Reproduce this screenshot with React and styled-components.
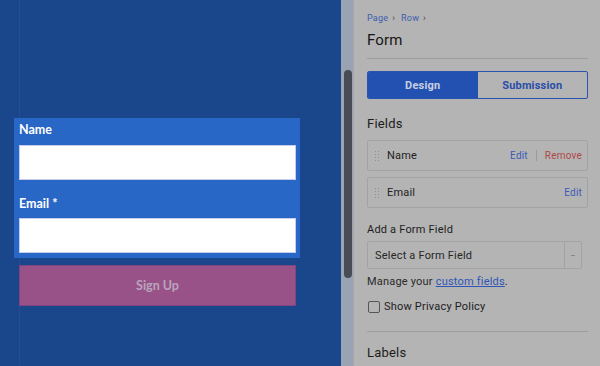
import React from 'react';
import styled, { createGlobalStyle } from 'styled-components';

const Global = createGlobalStyle`
  html, body { margin: 0; padding: 0; }
  body { font-family: Roboto, "Liberation Sans", sans-serif; background: #b4b4b4; }
  * { box-sizing: border-box; }
`;

const Screen = styled.div`
  display: flex;
  width: 600px;
  height: 366px;
  overflow: hidden;
`;

const Canvas = styled.div`
  width: 341px;
  flex-shrink: 0;
  background: #1a478c;
  padding: 118px 0 0 14px;
  background-image: linear-gradient(to right, transparent 19px, rgba(50, 90, 160, 0.35) 19px, rgba(50, 90, 160, 0.35) 20px, transparent 20px);
`;

const FormBox = styled.div`
  width: 286px;
  background: #2967c7;
  padding: 4px 4px 5px 5px;
  display: flex;
  flex-direction: column;
`;

const FieldLabel = styled.label`
  font-family: Lato, "Open Sans", sans-serif;
  font-weight: 700;
  font-size: 12.5px;
  line-height: 16px;
  color: #fff;
  margin-top: ${p => (p.$first ? 0 : 16)}px;
  margin-bottom: ${p => (p.$first ? 7 : 6)}px;
`;

const TextInput = styled.input`
  height: 35px;
  width: 277px;
  border: 1px solid #c7cde8;
  background: #fff;
  margin: 0;
`;

const SignUp = styled.button`
  margin: 7px 0 0 5px;
  width: 277px;
  height: 41px;
  background: #985287;
  border: 1px solid #7e4680;
  color: #b9a4bc;
  font-family: Lato, "Open Sans", sans-serif;
  font-weight: 700;
  font-size: 12.5px;
`;

const Track = styled.div`
  width: 13px;
  flex-shrink: 0;
  background: #99a3b3;
  border-right: 1px solid #a6a6a6;
  padding: 70px 0 0 3px;
`;

const Thumb = styled.div`
  width: 8px;
  height: 208px;
  border-radius: 4px;
  background: #474c55;
`;

const Panel = styled.div`
  flex: 1;
  background: #b4b4b4;
  padding: 12px 12px 0 13px;
  display: flex;
  flex-direction: column;
  color: #1d1d1d;
  letter-spacing: 0.2px;
`;

const Crumbs = styled.div`
  display: flex;
  align-items: center;
  gap: 4px;
  font-size: 9px;
  line-height: 12px;
  color: #3d5db0;
`;

const Chevron = styled.span`
  color: #444;
  font-size: 9px;
  margin-right: 2px;
`;

const Title = styled.div`
  margin-top: 6px;
  font-size: 15px;
  line-height: 20px;
  color: #161616;
`;

const Rule = styled.div`
  height: 1px;
  background: #9d9d9d;
  margin-top: ${p => p.$top}px;
`;

const Tabs = styled.div`
  display: flex;
  margin-top: 12px;
  height: 28px;
  border: 1px solid #2a52b0;
  border-radius: 2px;
  overflow: hidden;
`;

const Tab = styled.div`
  flex: 1;
  display: flex;
  align-items: center;
  justify-content: center;
  font-size: 11px;
  font-weight: 700;
  background: ${p => (p.$active ? '#2351b1' : 'transparent')};
  color: ${p => (p.$active ? '#c8d0e2' : '#2a4ea8')};
`;

const Heading = styled.div`
  margin-top: ${p => p.$top}px;
  font-size: 13px;
  line-height: 18px;
  color: #1d1d1d;
`;

const FieldRow = styled.div`
  display: flex;
  align-items: center;
  height: 31px;
  margin-top: ${p => p.$top}px;
  border: 1px solid #a3a3a3;
  border-radius: 2px;
  padding: 0 5px 0 6px;
  font-size: 11px;
`;

const Grip = styled.div`
  width: 5px;
  height: 11px;
  margin-right: 8px;
  background-image: radial-gradient(circle, #8e8e8e 0.8px, transparent 1px);
  background-size: 3px 3px;
`;

const RowName = styled.span`
  flex: 1;
  color: #222;
`;

const Action = styled.span`
  font-size: 10px;
  color: ${p => (p.$danger ? '#b04848' : '#3b5bb4')};
`;

const Sep = styled.span`
  width: 1px;
  height: 11px;
  background: #9a9a9a;
  margin: 0 8px;
`;

const SmallLabel = styled.div`
  margin-top: 15px;
  font-size: 11px;
  line-height: 14px;
  color: #1d1d1d;
`;

const Select = styled.div`
  display: flex;
  margin-top: 4px;
  width: 215px;
  height: 28px;
  border: 1px solid #a3a3a3;
  border-radius: 2px;
  font-size: 11px;
  color: #262626;
`;

const SelectText = styled.div`
  flex: 1;
  display: flex;
  align-items: center;
  padding-left: 7px;
`;

const Caret = styled.div`
  width: 17px;
  border-left: 1px solid #a3a3a3;
  display: flex;
  align-items: center;
  justify-content: center;
  &::after {
    content: '';
    width: 4px;
    height: 1px;
    background: #888;
  }
`;

const Note = styled.div`
  margin-top: 6px;
  font-size: 11px;
  line-height: 14px;
  color: #2a2a2a;
  a { color: #2f55b8; text-decoration: underline; }
`;

const Check = styled.label`
  display: flex;
  align-items: center;
  gap: 4px;
  margin-top: 11px;
  font-size: 11px;
  line-height: 14px;
  color: #1d1d1d;
  &::before {
    content: '';
    width: 10px;
    height: 10px;
    border: 1px solid #555;
    border-radius: 2px;
    margin-left: 1px;
  }
`;

export default function App() {
  return (
    <>
      <Global />
      <Screen>
        <Canvas>
          <FormBox>
            <FieldLabel $first>Name</FieldLabel>
            <TextInput />
            <FieldLabel>Email *</FieldLabel>
            <TextInput />
          </FormBox>
          <SignUp>Sign Up</SignUp>
        </Canvas>
        <Track>
          <Thumb />
        </Track>
        <Panel>
          <Crumbs>
            <span>Page</span>
            <Chevron>›</Chevron>
            <span>Row</span>
            <Chevron>›</Chevron>
          </Crumbs>
          <Title>Form</Title>
          <Rule $top={8} />
          <Tabs>
            <Tab $active>Design</Tab>
            <Tab>Submission</Tab>
          </Tabs>
          <Heading $top={16}>Fields</Heading>
          <FieldRow $top={7}>
            <Grip />
            <RowName>Name</RowName>
            <Action>Edit</Action>
            <Sep />
            <Action $danger>Remove</Action>
          </FieldRow>
          <FieldRow $top={6}>
            <Grip />
            <RowName>Email</RowName>
            <Action>Edit</Action>
          </FieldRow>
          <SmallLabel>Add a Form Field</SmallLabel>
          <Select>
            <SelectText>Select a Form Field</SelectText>
            <Caret />
          </Select>
          <Note>
            Manage your <a href="#">custom fields</a>.
          </Note>
          <Check>Show Privacy Policy</Check>
          <Rule $top={17} />
          <Heading $top={12}>Labels</Heading>
        </Panel>
      </Screen>
    </>
  );
}
